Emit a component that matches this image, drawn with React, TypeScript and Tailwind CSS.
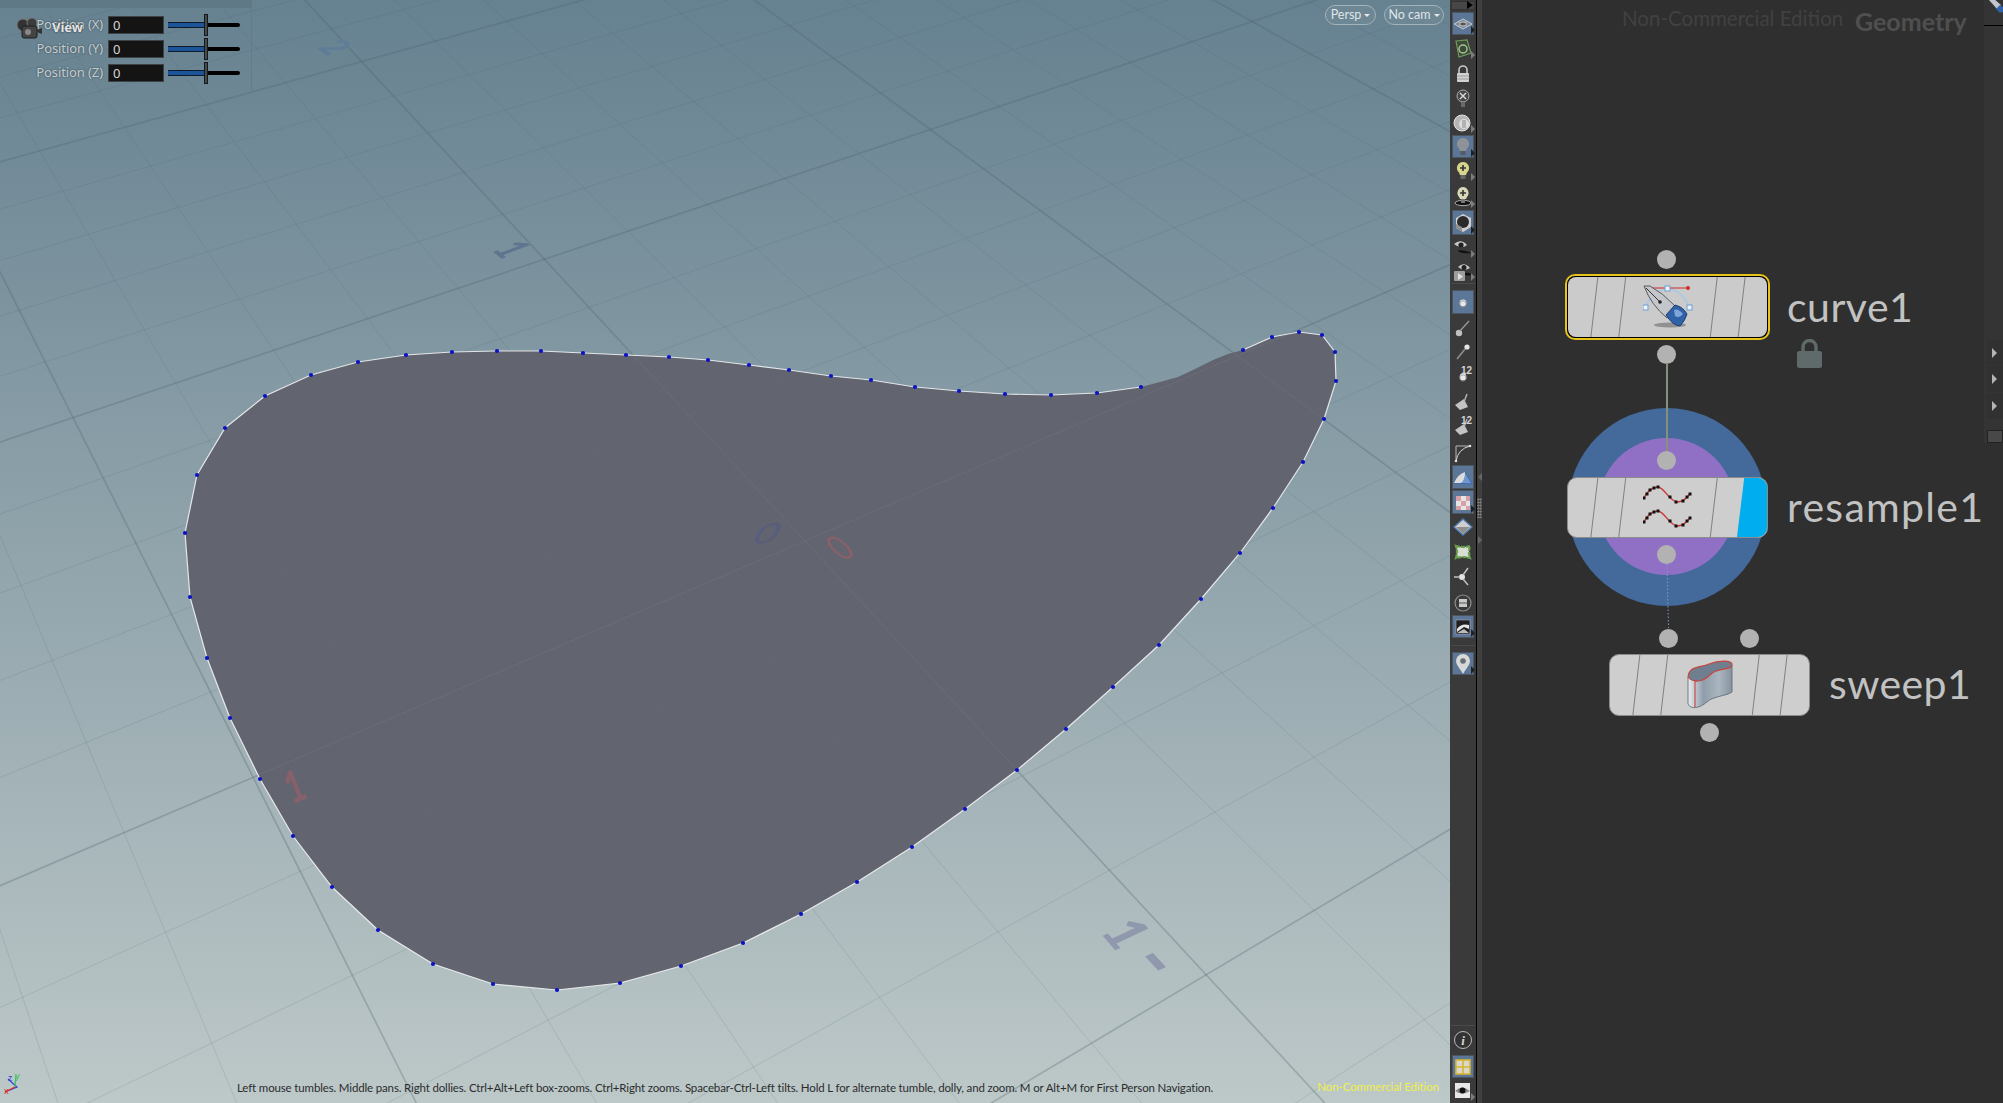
import React from "react";

const FONT = "font-['Noto_Sans','Open_Sans',sans-serif]";
const LATO = "font-['Lato','Noto_Sans',sans-serif]";

// curve points as they sit in the viewport, clockwise from the left edge
const dots: [number, number][] = [
  [197, 475], [225, 428], [265, 396], [311, 375], [358, 362], [406, 355], [452, 352], [497, 351],
  [541, 351], [583, 353], [626, 355], [669, 357], [708, 360], [749, 365], [789, 370], [831, 376],
  [871, 380], [915, 387], [959, 391], [1005, 394], [1051, 395], [1097, 393], [1141, 387], [1243, 350],
  [1272, 337], [1299, 332], [1322, 335], [1335, 352], [1336, 381], [1324, 419], [1303, 462], [1273, 508],
  [1240, 553], [1201, 599], [1159, 645], [1113, 687], [1066, 729], [1017, 770], [965, 809], [912, 847],
  [857, 882], [801, 914], [743, 943], [681, 966], [620, 983], [557, 990], [493, 984], [433, 964],
  [378, 930], [332, 887], [293, 836], [260, 779], [230, 718], [207, 658], [190, 597], [185, 533],
];

// the fill runs through this stretch with no points and no white edge
const bridge = [[1160, 382], [1178, 377], [1195, 369], [1213, 360], [1228, 354]];

const outline = dots
  .flatMap((p) => (p[0] === 1243 ? [...bridge, p] : [p]))
  .map((p) => p.join(","))
  .join(" ");

const edge = [...dots.slice(23), ...dots.slice(0, 23)].map((p) => p.join(",")).join(" ");

const vpA = [4800, -1170];
const vpB = [-657, -1040];

function gridLines() {
  const lines: { x1: number; y1: number; x2: number; y2: number; bold: boolean }[] = [];
  for (let i = -40; i <= 15; i++) {
    const x = -657 + 1 / (0.000684 - 0.0000292 * i);
    const y = 123 + 1.1 * (x - 425);
    lines.push({
      x1: vpA[0],
      y1: vpA[1],
      x2: x + (x - vpA[0]) * 3,
      y2: y + (y - vpA[1]) * 3,
      bold: i % 5 === 0,
    });
  }
  for (let j = -25; j <= 40; j++) {
    const x = 4800 - 1 / (0.00025025 + 0.00000607 * j);
    const y = 884 - 0.428 * x;
    lines.push({
      x1: vpB[0],
      y1: vpB[1],
      x2: x + (x - vpB[0]) * 3,
      y2: y + (y - vpB[1]) * 3,
      bold: j % 5 === 0,
    });
  }
  return lines;
}

const Ground = () => {
  const lines = gridLines();
  return (
    <svg className="block w-full h-full" viewBox="0 0 1450 1103">
      <defs>
        <clipPath id="shape">
          <polygon points={outline} />
        </clipPath>
      </defs>
      {lines.map((l, i) => (
        <line
          key={i}
          x1={l.x1}
          y1={l.y1}
          x2={l.x2}
          y2={l.y2}
          stroke="#4c626e"
          strokeWidth={l.bold ? 1.7 : 1}
          strokeOpacity={l.bold ? 0.3 : 0.17}
        />
      ))}
      <g className={LATO} fontWeight="900" fontSize="34">
        <text transform="matrix(0.55 0.45 -1.05 0.4 322 52)" fill="#5f7d96" textAnchor="middle">2</text>
        <text transform="matrix(0.6 0.5 -1.25 0.47 497 255)" fill="#5e7590" textAnchor="middle">1</text>
        <text transform="matrix(0.9 1.05 -1.5 0.7 1108 942)" fill="#8f98ac" textAnchor="middle">1</text>
        <text transform="matrix(1.45 1.55 -2 0.9 1135 971)" fill="#8f98ac" textAnchor="middle">-</text>
      </g>
      <polygon points={outline} fill="#62646f" />
      <g clipPath="url(#shape)">
        {lines.map((l, i) => (
          <line
            key={i}
            x1={l.x1}
            y1={l.y1}
            x2={l.x2}
            y2={l.y2}
            stroke="#76858c"
            strokeWidth="1"
            strokeOpacity={l.bold ? 0.3 : 0.13}
          />
        ))}
      </g>
      <g className={LATO} fontSize="32">
        <text transform="matrix(1.4 -0.3 -0.4 0.85 763 543)" fill="#585d7e" textAnchor="middle">0</text>
        <text transform="matrix(0.8 -0.4 0.9 0.9 850 558)" fill="#86606a" textAnchor="middle">0</text>
        <text transform="matrix(0.9 -0.4 0.52 1.28 300 801)" fill="#86606a" textAnchor="middle" fontWeight="900">1</text>
      </g>
      <polyline points={edge} fill="none" stroke="#ffffff" strokeWidth="1.2" strokeOpacity="0.8" />
      {dots.map(([x, y]) => (
        <circle key={`${x}-${y}`} cx={x} cy={y} r="2.1" fill="#0a12c4" />
      ))}
      <g fill="none" strokeWidth="1.2">
        <path d="M5 1092 L17 1087 L8 1079" stroke="#3341d8" />
        <path d="M15 1087 L16 1075" stroke="#35c455" />
        <path d="M5 1092 L15 1087" stroke="#e02b20" />
      </g>
      <text x="8" y="1081" fontSize="9" fill="#3341d8" className={FONT}>z</text>
      <text x="15" y="1079" fontSize="9" fill="#35c455" className={FONT}>y</text>
      <text x="4" y="1094" fontSize="9" fill="#e02b20" className={FONT}>x</text>
    </svg>
  );
};

const CameraGlyph = () => (
  <svg width="26" height="24" viewBox="0 0 26 24">
    <circle cx="7" cy="8" r="6" fill="#333" stroke="#777" />
    <circle cx="16" cy="6" r="5" fill="#3c3c3c" stroke="#777" />
    <rect x="6" y="9" width="15" height="12" rx="2" fill="#444" stroke="#1f1f1f" />
    <circle cx="12" cy="15" r="3" fill="#888" />
    <path d="M21 13 l5 -2 v6 l-5 -2z" fill="#333" />
  </svg>
);

const Slider = () => (
  <div className="relative w-[72px] h-[20px] ml-[4px]">
    <div className="absolute left-0 right-0 top-[8px] h-[4px] bg-black rounded-sm" />
    <div className="absolute left-0 w-[37px] top-[7px] h-[6px] bg-[#1c5498] border-y border-[#0c1a2c]" />
    <div className="absolute left-[36px] top-[-1px] w-[4px] h-[22px] bg-[#454a4d] border border-[#15181a]" />
  </div>
);

const ParmRow = ({ label }: { label: string }) => (
  <div className="flex items-center h-[24px]">
    <div className="w-[103px] text-right text-[13px] text-[#c4cdd0] [text-shadow:0_0_2px_#33424a] tracking-[-0.1px]">
      {label}
    </div>
    <div className="ml-[5px] w-[56px] h-[18px] bg-[#141414] border border-[#3c4245] pl-[4px] text-[13px] leading-[16px] text-[#d6d6d6]">
      0
    </div>
    <Slider />
  </div>
);

const Parms = () => (
  <div className={`absolute left-0 top-0 w-[252px] ${FONT}`}>
    <div className="h-[8px] bg-[#5f7987]" />
    <div className="relative pt-[5px] pb-[1px] h-[84px] border-r border-[#627c8a]">
      <ParmRow label="Position (X)" />
      <ParmRow label="Position (Y)" />
      <ParmRow label="Position (Z)" />
      <div className="absolute left-[16px] top-[9px]">
        <CameraGlyph />
      </div>
      <div className="absolute left-[52px] top-[10px] text-[13px] font-bold text-[#e2e6e8] [text-shadow:0_0_2px_#222]">
        View
      </div>
    </div>
  </div>
);

const Pill = ({ label, w }: { label: string; w: string }) => (
  <div
    className={`${w} h-[20px] flex items-center justify-center gap-[3px] rounded-full border border-[#a3b3ba] bg-[#6e8794] ${LATO} text-[12.5px] text-[#dfe5e8]`}
  >
    {label}
    <span className="w-0 h-0 mt-[1px] border-x-[3.5px] border-x-transparent border-t-[3.5px] border-t-[#e6eaec]" />
  </div>
);

/* ---- toolbar icons, all on a 20x20 box ---- */
const I = ({ children }: { children: React.ReactNode }) => (
  <svg width="20" height="20" viewBox="0 0 20 20">
    {children}
  </svg>
);

const icons: Record<string, React.ReactNode> = {
  wire: (
    <I>
      <path d="M10 5 L19 10 L10 15 L1 10Z" fill="#7f8a99" stroke="#c5c9ce" />
      <path d="M5 7.5 L14 12.5M14 7.5 L5 12.5" stroke="#c5c9ce" strokeWidth="0.7" />
      <ellipse cx="10" cy="10" rx="3.4" ry="2" fill="#555" stroke="#ddd" strokeWidth="0.8" />
    </I>
  ),
  sel: (
    <I>
      <path d="M3 2 L14 1 L18 14 L6 18Z" fill="#3d4a36" stroke="#6f9a5e" strokeWidth="1.2" />
      <circle cx="10" cy="10" r="4" fill="none" stroke="#a9c79a" strokeWidth="1.4" />
    </I>
  ),
  lock: (
    <I>
      <path d="M6 9 V6 a4 4 0 0 1 8 0 V9" fill="none" stroke="#c8c8c8" strokeWidth="1.6" />
      <rect x="4" y="9" width="12" height="9" rx="1" fill="#d2d2d2" />
      <path d="M4 12h12M4 15h12" stroke="#9b9b9b" />
    </I>
  ),
  ghost: (
    <I>
      <circle cx="10" cy="7" r="6" fill="#484848" stroke="#aaa" />
      <path d="M7 4l6 6M13 4l-6 6" stroke="#ddd" strokeWidth="1.4" />
      <rect x="8" y="13" width="4" height="5" fill="#6a6a6a" />
    </I>
  ),
  ball: (
    <I>
      <circle cx="9" cy="10" r="8" fill="#b5b5b5" stroke="#e2e2e2" />
      <circle cx="11" cy="11" r="5" fill="#ddd" />
      <path d="M10 7v8M12 7v8" stroke="#888" />
    </I>
  ),
  bulb: (
    <I>
      <path d="M10 1 a6 6 0 0 1 4 10.5 L13 14 H7 L6 11.5 A6 6 0 0 1 10 1Z" fill="#8f9296" />
      <rect x="7.5" y="14" width="5" height="4" fill="#555b63" />
    </I>
  ),
  bulbPlus: (
    <I>
      <path d="M10 1 a6 6 0 0 1 4 10.5 L13 14 H7 L6 11.5 A6 6 0 0 1 10 1Z" fill="#d5d58e" />
      <path d="M10 4v6M7 7h6" stroke="#333" strokeWidth="1.6" />
      <rect x="7.5" y="14" width="5" height="4" fill="#666" />
    </I>
  ),
  bulbHole: (
    <I>
      <path d="M10 0 a6 6 0 0 1 4 10 L13 12 H7 L6 10 A6 6 0 0 1 10 0Z" fill="#d8d8b8" />
      <path d="M10 3v6M7 6h6" stroke="#333" strokeWidth="1.6" />
      <ellipse cx="10" cy="16" rx="8" ry="2.6" fill="#111" stroke="#aaa" />
      <rect x="8" y="12" width="4" height="4" fill="#777" />
    </I>
  ),
  shade: (
    <I>
      <path d="M10 1 L18 5 V14 L10 19 L3 15 V5Z" fill="#cfcfcf" />
      <circle cx="10" cy="9" r="6" fill="#2a2a2a" />
      <path d="M3 11 L9 14 L9 19 L3 15Z" fill="#8f8f8f" />
    </I>
  ),
  eyeShadow: (
    <I>
      <path d="M1 6 Q8 0 14 7 Q8 12 1 6Z" fill="#c9c9c9" />
      <circle cx="8" cy="7" r="2.6" fill="#222" />
      <path d="M5 12 Q12 12 19 15 Q11 16 6 14Z" fill="#111" />
    </I>
  ),
  camEye: (
    <I>
      <path d="M5 5 Q11 -1 17 6 Q11 10 5 5Z" fill="#c9c9c9" />
      <circle cx="11" cy="5.5" r="2.5" fill="#222" />
      <rect x="1" y="9" width="11" height="10" rx="1" fill="#9d9d9d" />
      <path d="M5 11 l5 3.5 -5 3.5Z" fill="#e0e0e0" />
      <path d="M12 11 Q17 10 19 13 Q15 14 12 13Z" fill="#111" />
    </I>
  ),
  dot: (
    <I>
      <circle cx="10" cy="10" r="3.4" fill="#e8e8e8" />
      <circle cx="10" cy="11" r="3.2" fill="none" stroke="#8b8b8b" strokeWidth="0.7" />
    </I>
  ),
  stick: (
    <I>
      <circle cx="6" cy="15" r="3.2" fill="#c0c0c0" />
      <path d="M7 13 L16 3" stroke="#9a9a9a" strokeWidth="1.3" />
    </I>
  ),
  pin: (
    <I>
      <circle cx="14" cy="5" r="2.6" fill="#e6e6e6" />
      <path d="M12 7 L4 17" stroke="#8a8a8a" strokeWidth="1.8" />
    </I>
  ),
  corner: (
    <I>
      <path d="M3 18 V3 H17" fill="none" stroke="#b9b9b9" />
      <path d="M3 18 Q5 6 17 3" fill="none" stroke="#d5d5d5" />
      <circle cx="3" cy="18" r="1.3" fill="#ddd" />
      <circle cx="17" cy="3" r="1.3" fill="#ddd" />
    </I>
  ),
  knob: (
    <I>
      <path d="M2 13 L11 7 L15 15 L7 18Z" fill="#c3c3c3" />
      <path d="M11 10 L14 2" stroke="#b5b5b5" strokeWidth="1.4" />
    </I>
  ),
  prism: (
    <I>
      <path d="M1 15 L12 4 L19 16Z" fill="#6f96d0" stroke="#3d69ad" />
      <path d="M1 15 Q5 6 12 4 Q12 12 8 15Z" fill="#dcdcdc" />
    </I>
  ),
  checker: (
    <I>
      <rect x="3" y="3" width="14" height="14" fill="#e5e5e5" />
      <path d="M3 3h5v5H3zM13 3h4v5h-4zM8 8h5v5H8zM3 13h5v4H3zM13 13h4v4h-4z" fill="#d7a0a6" />
    </I>
  ),
  diamond: (
    <I>
      <path d="M10 2 L19 10 L10 18 L1 10Z" fill="#cfcfcf" stroke="#4c78b0" strokeWidth="1.4" />
      <path d="M3 10 H17 L10 17Z" fill="#8f8f8f" />
    </I>
  ),
  cage: (
    <I>
      <path d="M3 4 Q10 6 17 4 Q15 10 17 16 Q10 14 3 16 Q5 10 3 4Z" fill="#d8dfd2" stroke="#6aa04c" strokeWidth="2.2" strokeDasharray="4 1" />
    </I>
  ),
  tri: (
    <I>
      <circle cx="9" cy="10" r="3" fill="#e4e4e4" />
      <path d="M1 10h6M10 8 L15 1M10 12 L15 18" stroke="#c0c0c0" strokeWidth="1.5" />
    </I>
  ),
  stop: (
    <I>
      <circle cx="10" cy="10" r="8" fill="none" stroke="#8e8e8e" strokeWidth="1.2" />
      <rect x="6" y="6" width="8" height="3.6" fill="#c9c9c9" />
      <rect x="6" y="10.4" width="8" height="3.6" fill="#c9c9c9" />
    </I>
  ),
  image: (
    <I>
      <rect x="3" y="3" width="14" height="14" fill="#1f1f1f" stroke="#aab" strokeWidth="0.6" />
      <path d="M4 12 Q8 6 16 8 V12 L11 10 L4 15Z" fill="#e3e3e3" />
      <path d="M4 16 L11 12 L16 16Z" fill="#bbb" />
    </I>
  ),
  marker: (
    <I>
      <path d="M10 0 a7 7 0 0 1 7 7 C17 11 12 16 10 20 C8 16 3 11 3 7 a7 7 0 0 1 7 -7Z" fill="#d8d8d8" />
      <circle cx="10" cy="7" r="2.8" fill="#676d76" />
    </I>
  ),
  info: (
    <I>
      <circle cx="10" cy="10" r="8.5" fill="#333" stroke="#b9b9b9" />
      <text x="10" y="15" textAnchor="middle" fontSize="13" fontStyle="italic" fontWeight="700" fill="#d8d8d8" fontFamily="Liberation Serif, serif">i</text>
    </I>
  ),
  quad: (
    <I>
      <rect x="3" y="3" width="14" height="14" fill="#d8d8d0" stroke="#d8b62a" strokeWidth="1.6" />
      <path d="M10 3v14M3 10h14" stroke="#d8b62a" strokeWidth="1.6" />
    </I>
  ),
  eye: (
    <I>
      <rect x="2" y="2" width="15" height="15" fill="#e8e8e8" />
      <path d="M2 10 Q9 3 17 10 Q9 15 2 10Z" fill="#888" />
      <circle cx="9.5" cy="9.5" r="3" fill="#111" />
    </I>
  ),
};

const Tool = ({
  name,
  h,
  on,
  arrow,
  num,
}: {
  name?: string;
  h: string;
  on?: boolean;
  arrow?: boolean;
  num?: boolean;
}) => (
  <div className={`relative ${h} flex items-center justify-center`}>
    {on && <div className="absolute left-[2px] right-[2px] top-0 bottom-[1px] bg-[#5b7697] border border-[#4a5560]" />}
    <div className="relative flex">{name && icons[name]}</div>
    {num && (
      <span className="absolute right-[4px] top-[2px] text-[10px] font-bold leading-none text-[#d4d4d4] font-['Liberation_Sans',sans-serif]">
        12
      </span>
    )}
    {arrow && (
      <span
        className={`absolute right-[1px] bottom-[2px] w-0 h-0 border-y-[4px] border-y-transparent border-l-[4px] ${
          on ? "border-l-[#1d2126]" : "border-l-[#7d7d7d]"
        }`}
      />
    )}
  </div>
);

const Sep = ({ m }: { m: string }) => <div className={`h-px mx-[1px] bg-[#4a4a4a] ${m}`} />;

const Toolbar = () => (
  <div className="w-[26px] shrink-0 h-full flex flex-col bg-[#3a3a3a]">
    <div className="h-[9px] mt-[1px] mb-[2px] mx-[1px] relative bg-[#474747] border border-[#333]">
      <span className="absolute right-[1px] top-[-1px] w-0 h-0 border-y-[4px] border-y-transparent border-l-[6px] border-l-black" />
    </div>
    <Tool name="wire" h="h-[24px]" on arrow />
    <Tool name="sel" h="h-[25px]" arrow />
    <Tool name="lock" h="h-[25px]" />
    <Tool name="ghost" h="h-[25px]" />
    <Tool name="ball" h="h-[24px]" arrow />
    <Tool name="bulb" h="h-[24px]" on arrow />
    <Tool name="bulbPlus" h="h-[24px]" arrow />
    <Tool name="bulbHole" h="h-[27px]" arrow />
    <Tool name="shade" h="h-[26px]" on arrow />
    <Tool name="eyeShadow" h="h-[24px]" arrow />
    <Tool name="camEye" h="h-[23px]" arrow />
    <Sep m="mb-[6px]" />
    <Tool name="dot" h="h-[25px]" on />
    <Tool name="stick" h="h-[25px]" />
    <Tool name="pin" h="h-[24px]" />
    <Tool name="dot" h="h-[26px]" num />
    <Tool name="knob" h="h-[24px]" />
    <Tool name="knob" h="h-[26px]" num />
    <Tool name="corner" h="h-[25px]" />
    <Tool name="prism" h="h-[25px]" on />
    <Tool name="checker" h="h-[25px]" on arrow />
    <Tool name="diamond" h="h-[24px]" />
    <Tool name="cage" h="h-[25px]" />
    <Tool name="tri" h="h-[26px]" />
    <Tool name="stop" h="h-[25px]" />
    <Tool name="image" h="h-[24px]" on arrow />
    <Sep m="mt-[6px] mb-[6px]" />
    <Tool name="marker" h="h-[24px]" on arrow />
    <div className="mt-auto" />
    <Sep m="mb-[2px]" />
    <Tool name="info" h="h-[24px] mb-[3px]" />
    <Tool name="quad" h="h-[24px]" on />
    <Tool name="eye" h="h-[24px]" arrow />
  </div>
);

const PenIcon = () => (
  <svg width="50" height="44" viewBox="0 0 50 44">
    <ellipse cx="27" cy="40" rx="16" ry="2.5" fill="#777" opacity="0.7" />
    <path d="M3 22 Q7 8 24 3 Q40 6 46 22" fill="none" stroke="#a8c8e6" strokeWidth="1.5" />
    <path d="M4 3 H45" stroke="#d42b2b" />
    <circle cx="45" cy="3" r="2" fill="#d42b2b" />
    <rect x="0" y="20" width="5" height="5" fill="#ecf3fb" stroke="#6e9ed2" />
    <rect x="44" y="20" width="5" height="5" fill="#ecf3fb" stroke="#6e9ed2" />
    <rect x="22" y="1" width="5" height="5" fill="#ecf3fb" stroke="#6e9ed2" />
    <path d="M1 1 L7 1 Q20 8 32 21 L24 33 Q8 20 1 1Z" fill="#c3c7cc" stroke="#3d3d3d" strokeWidth="0.8" />
    <path d="M3 3 L17 17" stroke="#333" />
    <circle cx="17" cy="17" r="1.8" fill="#222" />
    <path d="M23 30 L32 20 Q40 22 44 29 Q42 36 37 41 Q29 40 23 30Z" fill="#2f62a6" stroke="#1f3e6d" />
    <path d="M31 25 Q35 23 40 29 Q36 34 32 31Z" fill="#7ea6d8" />
  </svg>
);

const Wave = ({ y }: { y: number }) => {
  const pts = [
    [1, 13], [4, 9], [7, 5], [11, 3], [15, 2], [27, 12], [33, 17], [40, 16], [44, 12], [47, 9],
  ];
  return (
    <g transform={`translate(0 ${y})`}>
      <path d="M1 13 C5 5 10 2 15 2 C22 3 25 15 34 17 C40 17 44 13 47 9" fill="none" stroke="#c73a32" strokeWidth="1.4" />
      {pts.map(([a, b]) => (
        <rect key={a} x={a - 1.5} y={b - 1.5} width="3" height="3" fill="#111" />
      ))}
    </g>
  );
};

const ResampleIcon = () => (
  <svg width="50" height="46" viewBox="0 0 50 46">
    <Wave y={0} />
    <Wave y={24} />
  </svg>
);

const SweepIcon = () => (
  <svg width="46" height="50" viewBox="0 0 46 50">
    <defs>
      <linearGradient id="sw" x1="0" x2="1">
        <stop offset="0" stopColor="#e8ecef" />
        <stop offset="0.35" stopColor="#8f9dab" />
        <stop offset="0.7" stopColor="#aab6c0" />
        <stop offset="1" stopColor="#8693a0" />
      </linearGradient>
    </defs>
    <path d="M1 17 L1 44 C4 50 13 48 20 42 C26 36 40 36 45 32 L45 5 Z" fill="url(#sw)" stroke="#5b6670" strokeWidth="0.8" />
    <path d="M1 17 C2 6 12 8 22 4 C30 1 46 -1 45 5 C45 10 30 8 24 14 C18 20 8 25 1 17Z" fill="#6f7f90" stroke="#c9453f" strokeWidth="1.1" />
    <path d="M8 20 V47" stroke="#d0403a" strokeWidth="1.1" />
  </svg>
);

const Dot = ({ x, y }: { x: string; y: string }) => (
  <div className={`absolute ${x} ${y} w-[19px] h-[19px] rounded-full bg-[#b2b2b2]`} />
);

const Stripes = ({ last = true }: { last?: boolean }) => (
  <svg className="absolute inset-0 w-full h-full" viewBox="0 0 200 60" preserveAspectRatio="none">
    <g stroke="#7f7f7f" strokeWidth="1">
      <path d="M30 0 L23 60M58 0 L51 60M150 0 L143 60" />
      {last && <path d="M178 0 L171 60" />}
    </g>
  </svg>
);

const Network = () => (
  <div className={`relative flex-1 h-full bg-[#2f2f2f] ${LATO}`}>
    <div className="absolute left-[140px] top-[6px] text-[20.5px] leading-[24px] text-[#414141]">
      Non-Commercial Edition
    </div>
    <div className="absolute left-[373px] top-[5px] text-[25px] leading-[32px] font-bold text-[#4f4f4f]">
      Geometry
    </div>

    {/* curve1 */}
    <Dot x="left-[175px]" y="top-[250px]" />
    <div className="absolute left-[83px] top-[274px] w-[205px] h-[66px] rounded-[10px] border-2 border-[#e6c21b] bg-black p-px">
      <div className="relative w-full h-full rounded-[8px] bg-[#cbcbcb] overflow-hidden">
        <Stripes />
        <div className="absolute inset-0 flex items-center justify-center">
          <PenIcon />
        </div>
      </div>
    </div>
    <Dot x="left-[175px]" y="top-[345px]" />
    <div className="absolute left-[184px] top-[363px] w-[2px] h-[88px] bg-[#84927c]" />
    <div className="absolute left-[305px] top-[281px] text-[41px] leading-[52px] tracking-[0.5px] text-[#c2c2c2]">curve1</div>
    <svg className="absolute left-[315px] top-[339px]" width="25" height="29" viewBox="0 0 25 29">
      <path d="M6 13 V8 a6.5 6.5 0 0 1 13 0 V13" fill="none" stroke="#5f6b6b" strokeWidth="3.4" />
      <rect x="0" y="12" width="25" height="17" rx="2.5" fill="#5f6b6b" />
    </svg>

    {/* resample1 */}
    <div className="absolute left-[86px] top-[408px] w-[198px] h-[198px] rounded-full bg-[#44699b]" />
    <div className="absolute left-[116px] top-[438px] w-[137px] h-[137px] rounded-full bg-[#8f70c4]" />
    <div className="absolute left-[184px] top-[408px] w-[2px] h-[43px] bg-[#84927c]" />
    <Dot x="left-[175px]" y="top-[451px]" />
    <div className="absolute left-[85px] top-[477px] w-[201px] h-[61px] rounded-[10px] border border-[#8b8b8b] bg-[#cecece] overflow-hidden">
      <Stripes last={false} />
      <div className="absolute inset-0 flex items-center justify-center">
        <ResampleIcon />
      </div>
      <div className="absolute right-0 top-0 bottom-0 w-[30px] bg-[#00aeef] [clip-path:polygon(24%_0,100%_0,100%_100%,0_100%)]" />
    </div>
    <Dot x="left-[175px]" y="top-[545px]" />
    <div className="absolute left-[305px] top-[481px] text-[41px] leading-[52px] tracking-[1.3px] text-[#c2c2c2]">resample1</div>
    <svg className="absolute left-[184px] top-[564px]" width="4" height="64">
      <line x1="1" y1="0" x2="2.5" y2="64" stroke="#7c9ec6" strokeDasharray="1.5 2" />
    </svg>

    {/* sweep1 */}
    <Dot x="left-[177px]" y="top-[629px]" />
    <Dot x="left-[258px]" y="top-[629px]" />
    <div className="absolute left-[127px] top-[654px] w-[201px] h-[62px] rounded-[10px] border border-[#8b8b8b] bg-[#cecece] overflow-hidden">
      <Stripes />
      <div className="absolute inset-0 flex items-center justify-center">
        <SweepIcon />
      </div>
    </div>
    <Dot x="left-[218px]" y="top-[723px]" />
    <div className="absolute left-[347px] top-[658px] text-[41px] leading-[52px] tracking-[0.4px] text-[#c2c2c2]">sweep1</div>

    {/* collapsed side strip */}
    <div className="absolute right-0 top-0 w-[19px] h-[443px] bg-[#343434] flex flex-col">
      <div className="h-[26px] border-b border-black overflow-hidden pl-[3px]">
        <svg width="16" height="14" viewBox="0 0 16 14">
          <path d="M2 0 L10 9 L14 5 L6 -2Z" fill="#c3c7cc" />
          <path d="M9 9 L13 5 L16 7 V12 L13 13Z" fill="#2f62a6" />
        </svg>
      </div>
      <div className="h-[314px]" />
      {["h-[25px]", "h-[26px]", "h-[26px]"].map((h, i) => (
        <div key={i} className={`${h} ml-[2px] mb-px bg-[#313131] flex items-center pl-[6px]`}>
          <span className="w-0 h-0 border-y-[5px] border-y-transparent border-l-[5px] border-l-[#b4b4b4]" />
        </div>
      ))}
      <div className="mt-auto ml-[3px] h-[13px] bg-[#484848] border border-[#222]" />
    </div>
  </div>
);

const App: React.FC = () => {
  return (
    <div className={`w-[2003px] h-[1103px] flex overflow-hidden bg-[#2f2f2f] ${FONT}`}>
      <div className="relative w-[1450px] h-full shrink-0 bg-linear-to-b from-[#668190] to-[#bdc8c8] overflow-hidden">
        <Ground />
        <Parms />
        <div className="absolute right-[6px] top-[5px] flex gap-[8px]">
          <Pill label="Persp" w="w-[51px]" />
          <Pill label="No cam" w="w-[60px]" />
        </div>
        <div className={`absolute left-[237px] top-[1079px] text-[11.5px] leading-[18px] tracking-[-0.15px] text-[#2a2d2e] whitespace-nowrap ${LATO}`}>
          Left mouse tumbles. Middle pans. Right dollies. Ctrl+Alt+Left box-zooms. Ctrl+Right zooms. Spacebar-Ctrl-Left tilts. Hold L for alternate tumble, dolly, and zoom. M or Alt+M for First Person Navigation.
        </div>
        <div className={`absolute right-[11px] top-[1078px] text-[11.5px] leading-[18px] tracking-[-0.1px] text-[#f0f04a] whitespace-nowrap ${LATO}`}>
          Non-Commercial Edition
        </div>
      </div>
      <Toolbar />
      <div className="w-px h-full bg-black" />
      <div className="w-[5px] h-full bg-[#404040] relative">
        <span className="absolute left-[1px] top-[473px] w-0 h-0 border-y-[4px] border-y-transparent border-r-[4px] border-r-[#666]" />
        <div className="absolute left-[0px] top-[498px] w-[5px] h-[20px] bg-[radial-gradient(#777_1px,transparent_1px)] bg-[length:2.5px_3px]" />
        <span className="absolute left-[1px] top-[536px] w-0 h-0 border-y-[4px] border-y-transparent border-l-[4px] border-l-[#666]" />
      </div>
      <Network />
    </div>
  );
};

export default App;
